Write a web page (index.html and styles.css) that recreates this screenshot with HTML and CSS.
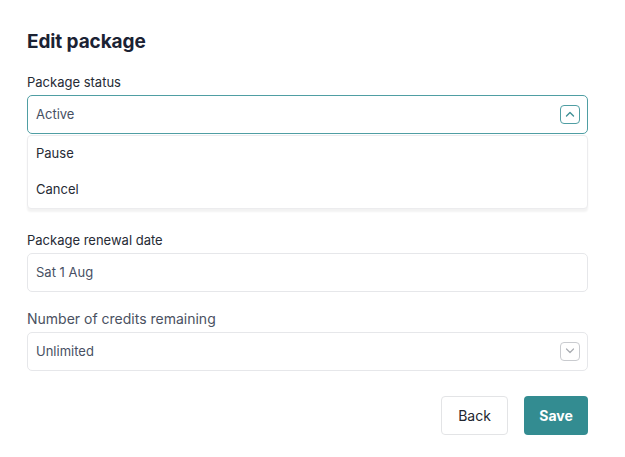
FILE: index.html
```html
<!DOCTYPE html>
<html lang="en">
<head>
<meta charset="utf-8">
<title>Edit package</title>
<link rel="stylesheet" href="styles.css">
</head>
<body>
<div class="page">
  <h1 class="title">Edit package</h1>

  <div class="field">
    <div class="label">Package status</div>
    <div class="select-wrap">
      <div class="control control-open">
        <span class="value">Active</span>
        <span class="chev chev-open">
          <svg width="10" height="6" viewBox="0 0 10 6"><path d="M1.5 5 L5 1.5 L8.5 5" fill="none" stroke="#3f8f95" stroke-width="1.4" stroke-linecap="round" stroke-linejoin="round"/></svg>
        </span>
      </div>
      <div class="menu">
        <div class="option">Pause</div>
        <div class="option">Cancel</div>
      </div>
    </div>
  </div>

  <div class="field hidden-field">
    <div class="label">Package type</div>
    <div class="control"><span class="value">Standard</span></div>
  </div>

  <div class="field">
    <div class="label">Package renewal date</div>
    <div class="control"><span class="value">Sat 1 Aug</span></div>
  </div>

  <div class="field">
    <div class="label label-lg">Number of credits remaining</div>
    <div class="control">
      <span class="value">Unlimited</span>
      <span class="chev">
        <svg width="10" height="6" viewBox="0 0 10 6"><path d="M1.5 1 L5 4.5 L8.5 1" fill="none" stroke="#a9acb2" stroke-width="1.2" stroke-linecap="round" stroke-linejoin="round"/></svg>
      </span>
    </div>
  </div>

  <div class="actions">
    <button class="btn btn-back">Back</button>
    <button class="btn btn-save">Save</button>
  </div>
</div>
</body>
</html>
```

FILE: styles.css
```css
* { box-sizing: border-box; }
html, body { margin: 0; padding: 0; background: #ffffff; }
body { font-family: Inter, "Noto Sans", "Liberation Sans", sans-serif; }

.page {
  width: 561px;
  margin-left: 27px;
  padding-top: 30px;
}

.title {
  margin: 0 0 19px 0;
  font-size: 19px;
  line-height: 24px;
  font-weight: 700;
  color: #1b2233;
  letter-spacing: -0.1px;
}

.field { margin-bottom: 18px; }

.label {
  font-size: 13px;
  line-height: 18px;
  color: #262b35;
  margin-bottom: 4px;
}
.label-lg {
  font-size: 14px;
  color: #4a5161;
  margin-bottom: 4px;
}

.select-wrap { position: relative; }

.control {
  height: 39px;
  border: 1px solid #e6e7ea;
  border-radius: 5px;
  display: flex;
  align-items: center;
  justify-content: space-between;
  padding: 0 7px 1px 8px;
  background: #fff;
}
.control-open { border-color: #4f9ea3; }

.value {
  font-size: 13px;
  color: #475063;
}

.chev {
  width: 20px;
  height: 19px;
  border: 1px solid #c9cbcf;
  border-radius: 4px;
  display: flex;
  align-items: center;
  justify-content: center;
}
.chev-open { border-color: #4f9ea3; }

.menu {
  position: absolute;
  left: 0;
  right: 0;
  top: 40px;
  z-index: 2;
  background: #fff;
  border: 1px solid #ececee;
  border-radius: 4px;
  box-shadow: 0 3px 2px rgba(0, 0, 0, 0.05);
}
.option {
  height: 36px;
  line-height: 34px;
  padding: 0 0 2px 8px;
  font-size: 13px;
  color: #262b35;
}

.hidden-field { visibility: hidden; }

.actions {
  display: flex;
  justify-content: flex-end;
  gap: 16px;
  margin-top: 25px;
}
.btn {
  height: 39px;
  border-radius: 4px;
  font-family: Inter, "Noto Sans", "Liberation Sans", sans-serif;
  font-size: 14px;
  padding: 0 0 1px 0;
  cursor: pointer;
}
.btn-back {
  width: 67px;
  background: #fff;
  border: 1px solid #e3e4e6;
  color: #222630;
}
.btn-save {
  width: 64px;
  background: #338c91;
  border: none;
  color: #fff;
  font-weight: 700;
}
```
